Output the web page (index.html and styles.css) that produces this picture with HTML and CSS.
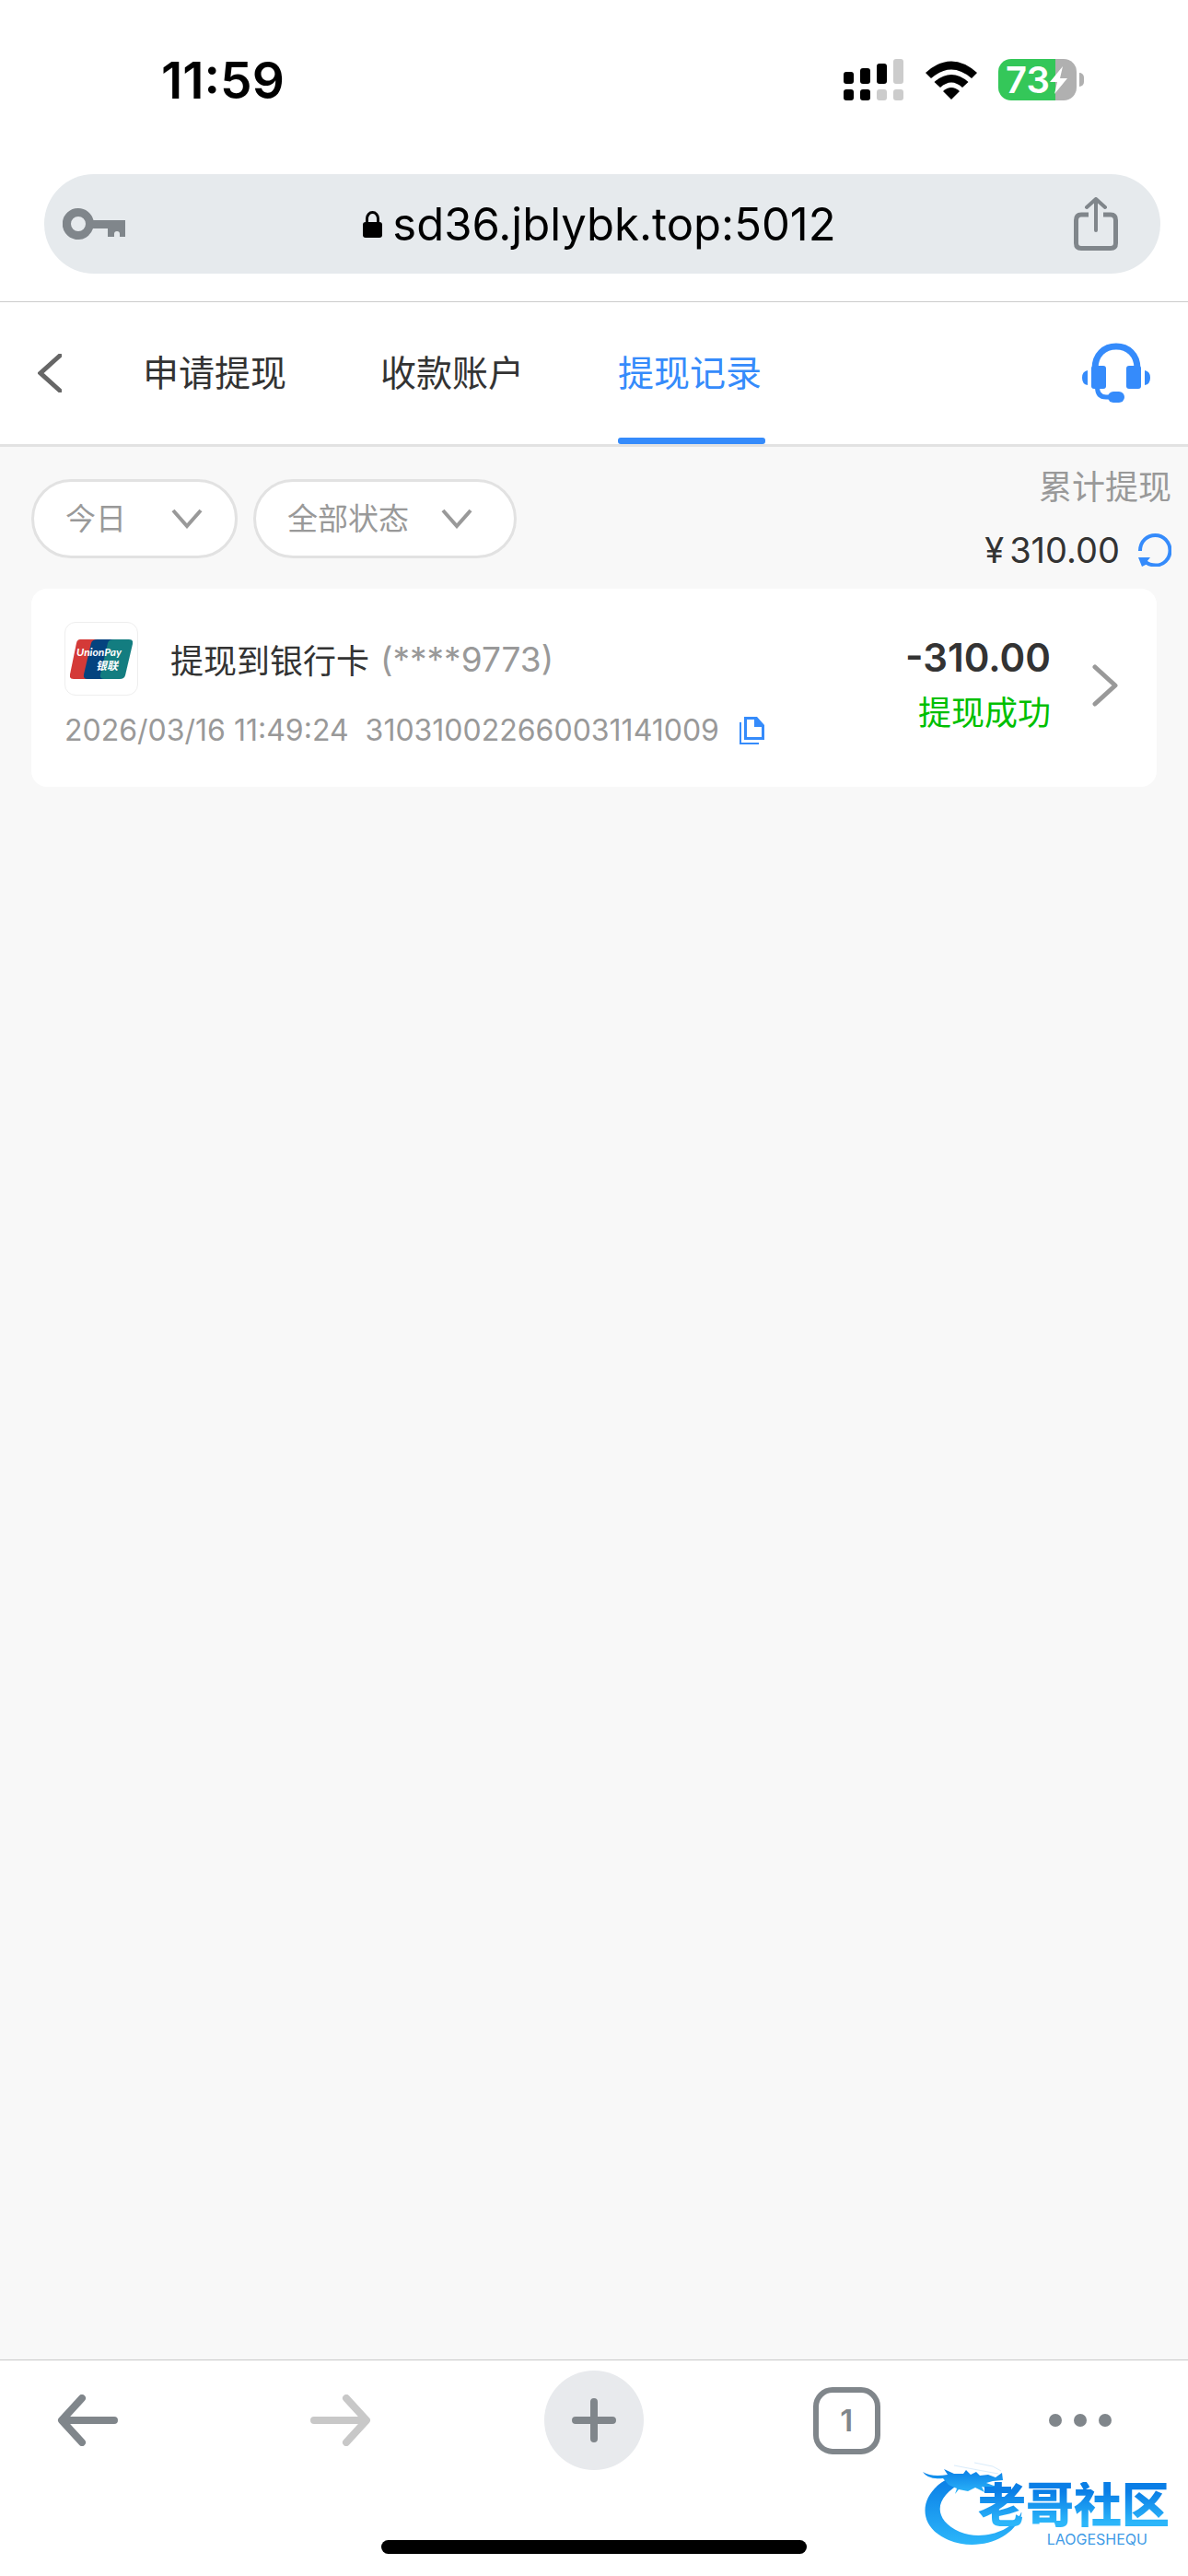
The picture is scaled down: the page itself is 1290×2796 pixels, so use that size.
FILE: index.html
```html
<!DOCTYPE html>
<html lang="zh-CN">
<head>
  <meta charset="UTF-8"/>
  <meta name="viewport" content="width=device-width,initial-scale=1.0"/>
  <title>提现记录</title>
  <link rel="stylesheet" href="styles.css">
</head>
<body>
  <div class="status-bar">
    <span class="time">11:59</span>
    <div class="status-icons">
      <svg class="signal" viewBox="0 0 65 45">
        <rect x="0" y="14" width="11" height="13" rx="3"/>
        <rect x="18" y="10" width="11" height="17" rx="3"/>
        <rect x="36" y="5" width="11" height="22" rx="3"/>
        <rect class="off" x="54" y="0" width="11" height="27" rx="3"/>
        <rect x="0" y="33" width="11" height="12" rx="3"/>
        <rect x="18" y="33" width="11" height="12" rx="3"/>
        <rect class="off" x="36" y="33" width="11" height="12" rx="3"/>
        <rect class="off" x="54" y="33" width="11" height="12" rx="3"/>
      </svg>
      <svg class="wifi" viewBox="0 0 58 42">
        <path d="M1 13Q29 -12 57 13L51 19Q29 0 7 19Z"/>
        <path d="M10.500 23Q29 7 47.500 23L41 29Q29 18 17 29Z"/>
        <path d="M20 33Q29 25 38 33L29 42Z"/>
      </svg>
      <div class="battery">
        <span>73</span>
        <svg class="bolt" viewBox="0 0 19 30"><path d="M14 0L0 17H8L5 30L19 13H11Z"/></svg>
      </div>
      <i class="battery-tip"></i>
    </div>
  </div>

  <div class="address-wrap">
    <div class="address">
      <button aria-label="密码">
        <svg class="key" viewBox="0 0 68 34">
          <path fill-rule="evenodd" d="M17 0A17 17 0 0 1 33.500 13H68V31H62V28A3 3 0 0 0 56 28V31H49V22H33A17 17 0 1 1 17 0ZM17 9A8 8 0 1 0 17 25A8 8 0 1 0 17 9Z"/>
        </svg>
      </button>
      <button class="url">
        <svg class="lock" viewBox="0 0 21 29">
          <rect x="0" y="12" width="21" height="17" rx="3"/>
          <path d="M4.500 13V8A6 6.500 0 0 1 16.500 8V13" fill="none" stroke="#000" stroke-width="3"/>
        </svg>
        <span>sd36.jblybk.top:5012</span>
      </button>
      <button aria-label="分享">
        <svg class="share" viewBox="0 0 48 58" fill="none" stroke="#80868b">
          <path d="M16 19H8Q2.500 19 2.500 25V50Q2.500 55.500 8 55.500H40Q45.500 55.500 45.500 50V25Q45.500 19 40 19H32" stroke-width="5"/>
          <path d="M24 36V3M14 11L24 2L34 11" stroke-width="4" stroke-linecap="round" stroke-linejoin="round"/>
        </svg>
      </button>
    </div>
  </div>

  <header class="header">
    <button class="back" aria-label="返回">
      <svg viewBox="0 0 26 42"><path d="M24 2L3 21L24 40"/></svg>
    </button>
    <nav class="tabs">
      <a href="#">申请提现</a>
      <a href="#">收款账户</a>
      <a href="#" class="active">提现记录</a>
    </nav>
    <button class="service" aria-label="客服">
      <svg viewBox="0 0 74 66">
        <path d="M14 30V28C14 13 24 4 37 4S60 13 60 28V30" fill="none" stroke="#358bfb" stroke-width="7"/>
        <rect x="10" y="25" width="16" height="25" rx="3"/>
        <rect x="48" y="25" width="16" height="25" rx="3"/>
        <path d="M6 30V46Q0 45 0 38T6 30ZM68 30V46Q74 45 74 38T68 30Z"/>
        <path d="M16.500 48Q16.500 59 26 59H31" fill="none" stroke="#358bfb" stroke-width="5"/>
        <rect x="28" y="53" width="18" height="12" rx="6"/>
      </svg>
    </button>
  </header>

  <main class="main">
    <div class="filters">
      <label class="filter day">
        <select aria-label="日期"><option>今日</option></select>
        <svg viewBox="0 0 34 22"><path d="M2 2L17 19L32 2"/></svg>
      </label>
      <label class="filter state">
        <select aria-label="状态"><option>全部状态</option></select>
        <svg viewBox="0 0 34 22"><path d="M2 2L17 19L32 2"/></svg>
      </label>
      <div class="total">
        <span class="total-label">累计提现</span>
        <div class="total-row">
          <span class="yen">¥</span>
          <span>310.00</span>
          <button class="refresh" aria-label="刷新">
            <svg viewBox="0 0 36 36">
              <path d="M2 19C2 8 10 2 18.500 2S34.500 9 34.500 18.500S27 34.500 19 34.500Q12 34.500 8 31" fill="none" stroke="#358bfb" stroke-width="4"/>
              <path d="M0 26H13L9 31L10 33L4 36Z"/>
            </svg>
          </button>
        </div>
      </div>
    </div>

    <article class="record">
      <div class="record-info">
        <div class="record-title">
          <div class="bank">
            <svg viewBox="0 0 68 43">
              <path d="M11 0H32L24 43H4Q-1 43 0 38L7 4Q8 0 11 0Z" fill="#d43a38"/>
              <path d="M30 0H52L42 43H19Q14 43 15 38L23 4Q24 0 30 0Z" fill="#04437f"/>
              <path d="M48 0H64Q69 0 68 5L60 39Q59 43 54 43H37Q32 43 33 38L41 4Q42 0 48 0Z" fill="#137d80"/>
              <text class="pay-en" x="7" y="18">UnionPay</text>
              <text class="pay-cn" x="28" y="33">银联</text>
            </svg>
          </div>
          <span class="name">提现到银行卡</span>
          <span class="card-no">(****9773)</span>
        </div>
        <div class="record-meta">
          <time>2026/03/16 11:49:24</time>
          <span>310310022660031141009</span>
          <button class="copy" aria-label="复制">
            <svg viewBox="0 0 27 30">
              <path fill-rule="evenodd" d="M5 0H19L27 9V25H5ZM8 3V22H24V11H16V3Z"/>
              <path d="M0 6H2V28H21V30H0Z"/>
            </svg>
          </button>
        </div>
      </div>
      <div class="record-amount">
        <strong>-310.00</strong>
        <span>提现成功</span>
      </div>
      <a class="more" href="#" aria-label="详情">
        <svg viewBox="0 0 28 46"><path d="M3 3L25 23L3 43"/></svg>
      </a>
    </article>
  </main>

  <footer class="toolbar">
    <div class="toolbar-row">
      <button aria-label="后退">
        <svg class="arrow" viewBox="0 0 67 56"><path d="M62 28H6M27 4L5 28L27 52"/></svg>
      </button>
      <button aria-label="前进" class="disabled">
        <svg class="arrow" viewBox="0 0 67 56"><path d="M5 28H61M40 4L62 28L40 52"/></svg>
      </button>
      <button aria-label="新标签页" class="plus">
        <svg viewBox="0 0 48 48"><path d="M24 4V44M4 24H44"/></svg>
      </button>
      <button aria-label="标签页"><span class="tab-count">1</span></button>
      <button aria-label="更多" class="dots">
        <svg viewBox="0 0 68 14">
          <circle cx="7" cy="7" r="7"/><circle cx="34" cy="7" r="7"/><circle cx="61" cy="7" r="7"/>
        </svg>
      </button>
    </div>
    <div class="home-bar"></div>

    <div class="watermark">
      <svg class="dragon" viewBox="0 0 110 92">
        <defs>
          <linearGradient id="blue" x1="0" y1="0" x2="0" y2="1">
            <stop offset="0" stop-color="#0a7ee6"/>
            <stop offset="1" stop-color="#2cb6fa"/>
          </linearGradient>
        </defs>
        <g fill="url(#blue)">
          <path d="M28 18C-4 34 -8 70 28 85C60 98 98 84 107 58Q108 52 106 57C96 76 64 86 40 76C10 62 12 38 44 22Z"/>
          <path d="M0 11Q10 17 27 14L23 8L34 13L44 13L47 9L52 14L58 11L62 15L71 14L79 17L86 12L87 20L76 21L69 23L77 26L85 24L84 31L73 29L64 27L67 33L57 28L49 32L39 30L35 35L37 29L28 25L22 18Q6 20 0 11Z"/>
        </g>
        <path d="M34 4L60 9L82 13M56 1L76 5L85 10" fill="none" stroke="#d9ecfb" stroke-width="1"/>
      </svg>
      <div class="brand">
        <b>老哥社区</b>
        <small>LAOGESHEQU</small>
      </div>
    </div>
  </footer>
</body>
</html>
```
FILE: styles.css
```css
* { box-sizing:border-box; }
body {
  margin:0; min-height:100vh; display:flex; flex-direction:column;
  font-family:Inter,"Noto Sans CJK SC",sans-serif; background:#f8f8f8; color:#333;
}
button { border:none; background:none; padding:0; margin:0; font:inherit; color:inherit; cursor:pointer; }
a { color:inherit; text-decoration:none; }
svg { display:block; flex-shrink:0; }

/* phone status bar */
.status-bar {
  display:flex; align-items:center; justify-content:space-between;
  height:173px; padding:0 113px 0 175px; background:#fff; color:#000;
}
.time { font-size:55px; font-weight:600; }
.status-icons { display:flex; align-items:center; }
.signal { width:65px; height:45px; margin-right:23px; }
.signal .off { fill:#ccc; }
.wifi { width:58px; height:42px; margin-right:22px; }
.battery {
  display:flex; align-items:center; width:85px; height:45px; padding-left:8px; border-radius:14px;
  background:linear-gradient(90deg,#34c759 62px,#b0b0b0 62px);
  color:#fff; font-size:40px; font-weight:600; line-height:45px;
}
.bolt { width:19px; height:30px; fill:#fff; }
.battery-tip { width:5px; height:15px; margin-left:3px; border-radius:0 5px 5px 0; background:#b0b0b0; }

/* browser address */
.address-wrap { padding:16px 30px 30px 48px; background:#fff; border-bottom:1px solid #ccc; }
.address {
  display:flex; align-items:center; justify-content:space-between;
  height:108px; padding:0 46px 0 20px; border-radius:54px; background:#e6eaed;
}
.key { width:68px; height:34px; fill:#80868b; }
.share { width:48px; height:58px; }
.url { display:flex; align-items:center; gap:11px; color:#000; font-size:49px; }
.lock { width:21px; height:29px; }

/* page header */
.header {
  display:flex; align-items:center; height:157px; padding:0 41px;
  background:#fff; border-bottom:3px solid #e2e2e2;
}
.back { width:26px; margin-right:88px; }
.back svg { width:26px; height:42px; fill:none; stroke:#666; stroke-width:5; stroke-linecap:round; }
.tabs { display:flex; align-self:stretch; gap:98px; }
.tabs a {
  display:flex; align-items:center; min-width:160px; padding-bottom:6px; font-size:39px;
}
.tabs .active { position:relative; color:#358bfb; }
.tabs .active::after {
  content:""; position:absolute; left:0; right:0; bottom:0; height:7px;
  border-radius:3px; background:#358bfb;
}
.service { margin-left:auto; }
.service svg { width:74px; height:66px; fill:#358bfb; }

/* filters */
.main { flex:1; }
.filters { display:flex; align-items:center; gap:17px; padding:10px 18px 8px 34px; }
.filter { position:relative; }
.filter select {
  display:block; width:100%; height:86px; padding:0 34px; border:3px solid #e2e2e2; border-radius:43px;
  appearance:none; background:#fff; color:#999; font:inherit; font-size:33px;
}
.filter svg {
  position:absolute; top:32px; width:34px; height:22px;
  fill:none; stroke:#999; stroke-width:4; pointer-events:none;
}
.day { width:224px; }
.day svg { right:38px; }
.state { width:286px; }
.state svg { right:48px; }
.total { margin-left:auto; display:flex; flex-direction:column; align-items:flex-end; line-height:68px; }
.total-label { font-size:36px; color:#999; }
.total-row { display:flex; align-items:center; font-size:38px; }
.yen { margin-right:6px; }
.refresh { margin-left:20px; }
.refresh svg { width:36px; height:36px; fill:#358bfb; }

/* record card */
.record {
  display:flex; align-items:center; margin:0 34px; padding:36px 42px 41px 36px;
  background:#fff; border-radius:17px;
}
.record-title { display:flex; align-items:center; font-size:36px; }
.bank {
  display:flex; align-items:center; justify-content:center; width:80px; height:80px;
  margin-right:35px; border:1px solid #eee; border-radius:12px;
}
.bank svg { width:68px; height:43px; }
.bank text { fill:#fff; font-style:italic; font-weight:700; }
.pay-en { font-family:Lato,sans-serif; font-size:12px; }
.pay-cn { font-family:"Noto Sans CJK SC",sans-serif; font-size:12px; }
.name { margin-right:12px; }
.card-no { font-size:37px; color:#999; }
.record-meta {
  display:flex; align-items:center; margin-top:18px;
  font-size:32px; line-height:40px; color:#999;
}
.record-meta time { margin-right:18px; }
.copy { margin-left:22px; }
.copy svg { width:27px; height:30px; fill:#358bfb; }
.record-amount {
  margin-left:auto; display:flex; flex-direction:column; align-items:flex-end; line-height:61px;
}
.record-amount strong { font-size:42px; font-weight:600; }
.record-amount span { font-size:36px; color:#00bf00; }
.more { margin-left:45px; }
.more svg { width:28px; height:46px; fill:none; stroke:#999; stroke-width:5; stroke-linecap:round; stroke-linejoin:round; }

/* browser toolbar */
.toolbar { position:relative; padding:11px 0 24px; background:#fff; border-top:1px solid #c8c8c8; }
.toolbar-row { display:flex; justify-content:space-between; padding:0 84px 0 41px; color:#80868b; }
.toolbar-row button { display:flex; align-items:center; justify-content:center; width:108px; height:108px; }
.toolbar-row svg { fill:none; stroke:currentColor; stroke-width:8; stroke-linecap:round; stroke-linejoin:round; }
.arrow { width:67px; height:56px; }
.toolbar-row .disabled { color:#c8c8c8; }
.plus { border-radius:50%; background:#e8eaed; }
.plus svg { width:48px; height:48px; }
.tab-count {
  width:73px; height:73px; border:6px solid #80868b; border-radius:21px;
  font-size:33px; font-weight:600; line-height:61px;
}
.toolbar-row .dots { width:66px; }
.toolbar-row .dots svg { width:68px; height:14px; fill:currentColor; stroke:none; }
.home-bar { width:462px; height:15px; margin:76px auto 0; border-radius:8px; background:#000; }

.watermark { position:absolute; right:20px; bottom:30px; display:flex; }
.dragon { width:110px; height:92px; margin-right:-50px; }
.brand { position:relative; display:flex; flex-direction:column; align-items:flex-end; padding-top:22px; }
.brand b {
  font-size:52px; font-weight:900; line-height:52px;
  background:linear-gradient(#0a7ee6 20%,#2cb6fa 85%); background-clip:text; -webkit-background-clip:text; color:transparent;
}
.brand small { margin-right:24px; font-size:16px; line-height:20px; color:#3f9be6; }
```
